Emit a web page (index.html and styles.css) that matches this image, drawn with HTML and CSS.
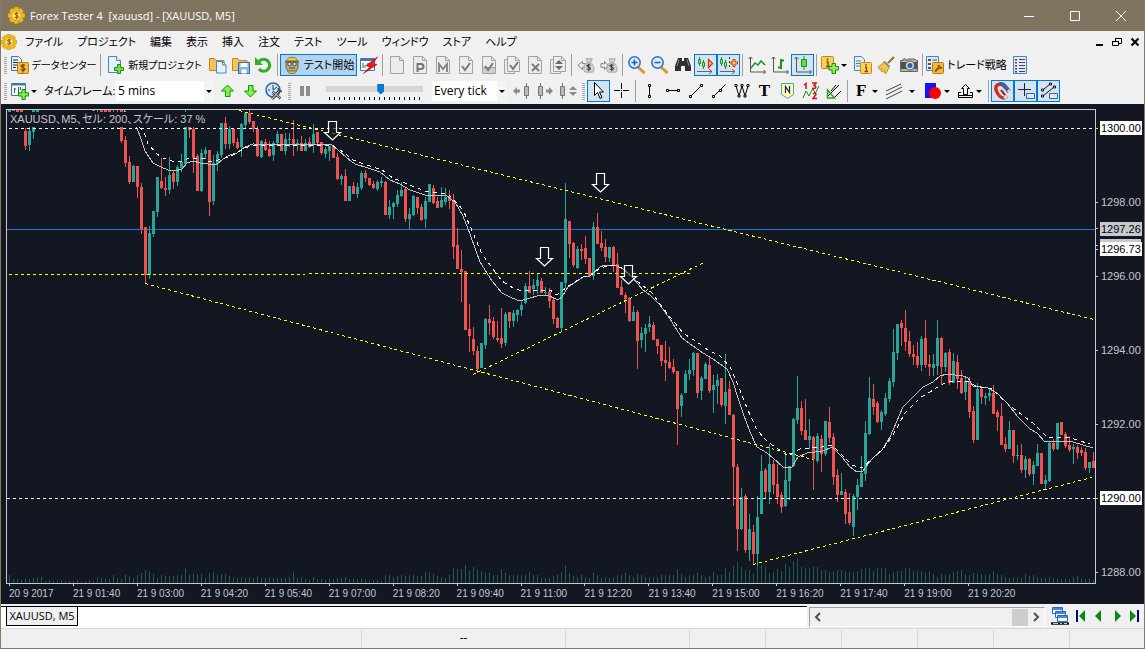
FILE: index.html
```html
<!DOCTYPE html>
<html lang="ja">
<head>
<meta charset="utf-8">
<title>Forex Tester 4</title>
<link rel="stylesheet" href="styles.css">
</head>
<body>
<svg class="defs" aria-hidden="true">
  <symbol id="gear" viewBox="0 0 18 18"><path d="M7 0h4l.6 2.4 2.2-1 2.6 2.8-1.200 2 2.800.9v3.800l-2.600.7 1 2.400-2.800 2.700-2.200-1.300-.9 2.600H7l-.8-2.500-2.300 1-2.600-2.700 1.200-2.200L0 11V7.200l2.500-.8-1-2.300L4.200 1.400l2 1z" fill="#f5b914" stroke="#c98a00" stroke-width=".6"/><circle cx="9" cy="9" r="5" fill="#ffe37a" stroke="#d79a10"/><path d="M11 7c-.5-1-3.600-1.300-3.600.4 0 1.600 3.600 1 3.600 2.800 0 1.600-3.300 1.500-3.900.2M9.200 5v8" fill="none" stroke="#8a6a1c" stroke-width="1.200"/></symbol>
  <symbol id="data" viewBox="0 0 18 18"><path d="M.5.5h7l3 3v11H.5z" fill="#e4effa" stroke="#44749f"/><path d="M2 4h5M2 6.500h5M2 9h4M2 11.500h3" stroke="#333"/><rect x="6.500" y="6.500" width="11" height="11" rx="1" fill="#f8bd3c" stroke="#b77a10"/><path d="M14 9.500c-1-1-4-1-4 .7 0 1.600 4 1 4 2.700 0 1.800-3.300 1.700-4.300.5M12 8v8.500" fill="none" stroke="#6b4a10" stroke-width="1.200"/></symbol>
  <symbol id="newdoc" viewBox="0 0 18 18"><path d="M1.500.5h8l4 4v12h-12z" fill="#e6f2fc" stroke="#4b83b8"/><path d="M9.500.5v4h4" fill="#fff" stroke="#4b83b8"/><path d="M10.500 8.500h3v3h3v3h-3v3h-3v-3h-3v-3h3z" fill="#7ee03c" stroke="#22891a"/></symbol>
  <symbol id="fopen" viewBox="0 0 18 18"><path d="M.5 14.500V2.500h5l1.500 2h8v10z" fill="#f8c25a" stroke="#c9861a"/><path d="M7.500 5.500h6l3.500 3.500v8H7.500z" fill="#e6f2fc" stroke="#4b83b8"/><path d="M13.500 5.500V9H17" fill="none" stroke="#4b83b8"/></symbol>
  <symbol id="fsave" viewBox="0 0 18 18"><path d="M.5 14.500V2.500h5l1.500 2h8v10z" fill="#f8c25a" stroke="#c9861a"/><path d="M6.500 6.500h11v11h-11z" fill="#86b4e6" stroke="#3768a5"/><path d="M8.500 7h7v4h-7zM9.500 13.500h5v4h-5z" fill="#fff"/></symbol>
  <symbol id="refresh" viewBox="0 0 18 18"><path d="M4 5.500A6 6 0 1 1 4 13" fill="none" stroke="#36ad2a" stroke-width="3.200"/><path d="M0 1v8h8z" fill="#36ad2a"/></symbol>
  <symbol id="tester" viewBox="0 0 18 18"><path d="M3.500 5C4 0 14 0 14.500 5z" fill="#e9c85a" stroke="#9a7d25"/><path d="M3 6h12v6l-2 3H5l-2-3z" fill="#b9ab8c" stroke="#6c6251"/><path d="M2 5.500h14" stroke="#806d32" stroke-width="1.500"/><circle cx="6.500" cy="8" r="1.800" fill="#e4e4e4" stroke="#444"/><circle cx="11.500" cy="8" r="1.800" fill="#e4e4e4" stroke="#444"/><path d="M6 12h6" stroke="#444"/><path d="M4.500 15h9l-2 2.500h-5z" fill="#e4bd49" stroke="#9a7d25"/></symbol>
  <symbol id="bolt" viewBox="0 0 18 18"><path d="M.5 2.500h14v12H.5z" fill="#fff" stroke="#3f76b5"/><path d="M1 4h13" stroke="#3f76b5" stroke-width="2"/><path d="M3 12V7M5 9v3M8 11V7M10 13V8" stroke="#267c24"/><path d="M17.500 1 6 9.500l4 1-6.500 7L17 8.500l-4-1z" fill="#f01818" stroke="#9d0b0b" stroke-width=".6"/></symbol>
  <symbol id="gdoc" viewBox="0 0 18 18"><path d="M2.500.5h9l4 4v13h-13z" fill="#ececec" stroke="#a2a2a2"/><path d="M11.500.5v4h4" fill="none" stroke="#a2a2a2"/></symbol>
  <symbol id="gdocs" viewBox="0 0 18 18"><path d="M1.500 3.500h10v14h-10z" fill="#ececec" stroke="#a2a2a2"/><path d="M4.500.5h8l4 4v11h-12z" fill="#ececec" stroke="#a2a2a2"/><path d="M12.500.5v4h4" fill="none" stroke="#a2a2a2"/></symbol>
  <symbol id="gp" viewBox="0 0 18 18"><use href="#gdoc"/><path d="M6.500 16V8H10q2.500.2 2.500 2.500T10 13H7" fill="none" stroke="#777" stroke-width="2"/></symbol>
  <symbol id="gm" viewBox="0 0 18 18"><use href="#gdoc"/><path d="M5 16V8l4 5 4-5v8" fill="none" stroke="#808080" stroke-width="1.800"/></symbol>
  <symbol id="gc" viewBox="0 0 18 18"><use href="#gdoc"/><path d="m5 10 3 4 5-7" fill="none" stroke="#7a7a7a" stroke-width="2"/></symbol>
  <symbol id="gch" viewBox="0 0 18 18"><use href="#gdoc"/><path d="M3 11h12v6H3z" fill="#cfcfcf"/><path d="M2 11.500h14" stroke="#a2a2a2"/><path d="m5 10 3 4 5-7" fill="none" stroke="#7a7a7a" stroke-width="2"/></symbol>
  <symbol id="gcs" viewBox="0 0 18 18"><use href="#gdocs"/><path d="m7 9 3 4 5-7" fill="none" stroke="#7a7a7a" stroke-width="2"/></symbol>
  <symbol id="gx" viewBox="0 0 18 18"><use href="#gdoc"/><path d="m6 8 7 7m0-7-7 7" fill="none" stroke="#7a7a7a" stroke-width="2"/></symbol>
  <symbol id="gud" viewBox="0 0 18 18"><use href="#gdocs"/><path d="m10 4 4 4H6zM10 14l4-4H6z" fill="#6b6b6b"/></symbol>
  <symbol id="gml" viewBox="0 0 20 18"><path d="M1 9.500 6 5v2.500h4v4H6V14z" fill="#eee" stroke="#777"/><path d="M10 2h7l-1.500 4h-4zM9 8q3-3 8 0 4 8 0 9H9q-3-3 0-9z" fill="#d2d2d2" stroke="#a5a5a5"/><path d="M15 9.500c-1-1-4-1-4 .6 0 1.500 4 1 4 2.700 0 1.600-3.300 1.600-4.200.4M13 8v8" fill="none" stroke="#444" stroke-width="1.200"/></symbol>
  <symbol id="gmr" viewBox="0 0 20 18"><path d="M10 2h7l-1.500 4h-4zM9 8q3-3 8 0 4 8 0 9H9q-3-3 0-9z" fill="#d2d2d2" stroke="#a5a5a5"/><path d="M9 9.500 5 5v2.500H1v4h4V14z" fill="#eee" stroke="#777"/><path d="M15 9.500c-1-1-4-1-4 .6 0 1.500 4 1 4 2.700 0 1.600-3.300 1.600-4.200.4M13 8v8" fill="none" stroke="#444" stroke-width="1.200"/></symbol>
  <symbol id="zin" viewBox="0 0 18 18"><path d="m10 11 6.500 6" stroke="#d79a27" stroke-width="3"/><circle cx="6.500" cy="6.500" r="5.700" fill="#d7ebfd" stroke="#2e6fc0" stroke-width="1.500"/><path d="M3.500 6.500h6M6.500 3.500v6" stroke="#2358a8" stroke-width="1.500"/></symbol>
  <symbol id="zout" viewBox="0 0 18 18"><path d="m10 11 6.500 6" stroke="#d79a27" stroke-width="3"/><circle cx="6.500" cy="6.500" r="5.700" fill="#d7ebfd" stroke="#2e6fc0" stroke-width="1.500"/><path d="M3.500 6.500h6" stroke="#2358a8" stroke-width="1.500"/></symbol>
  <symbol id="bino" viewBox="0 0 18 18"><path d="M4 2h4v3h2V2h4l3 8v5h-6v-5H7v5H1v-5z" fill="#2f2f33"/><path d="M5 3.500 3 10M13 3.500 15 10" stroke="#85858c"/></symbol>
  <symbol id="shift" viewBox="0 0 18 18"><path d="M2.500 1v9M6.500 4v9" stroke="#1d9425"/><path d="M1.500 3.500h2v4h-2zM5.500 6.500h2v4h-2z" fill="#9fe08b" stroke="#1d9425"/><path d="m11.500 3.500 4 4-4 4z" fill="#ffec3d" stroke="#e02020" stroke-width="1.200"/><path d="M0 15.500h15m-3-2.500 3 2.500-3 2.500" fill="none" stroke="#666"/></symbol>
  <symbol id="shift2" viewBox="0 0 18 18"><path d="M1.500 1v9M5.500 4v9" stroke="#1d9425"/><path d="M.5 3.500h2v4h-2zM4.500 6.500h2v4h-2z" fill="#9fe08b" stroke="#1d9425"/><path d="M9.500 1v12" stroke="#333" stroke-dasharray="2 2"/><path d="M13 3.500h2V6h2.500v2H15v2.500h-2V8h-2V6h2z" fill="#ffec3d" stroke="#e02020"/><path d="M0 15.500h15m-3-2.500 3 2.500-3 2.500" fill="none" stroke="#666"/></symbol>
  <symbol id="axes" viewBox="0 0 18 18"><path d="M2.500 1v15h15M.5 3l2-2 2 2M15.500 14l2 2-2 2" fill="none" stroke="#555"/></symbol>
  <symbol id="cline" viewBox="0 0 18 18"><use href="#axes"/><path d="m3 12 4-5 3 2 3-4 4 4" fill="none" stroke="#17951e" stroke-width="1.500"/></symbol>
  <symbol id="cbar" viewBox="0 0 18 18"><use href="#axes"/><path d="M10 3v10M7 11.500h3M10 4.500h3" fill="none" stroke="#17951e" stroke-width="2"/></symbol>
  <symbol id="ccan" viewBox="0 0 18 18"><use href="#axes"/><path d="M10 0v14" stroke="#17951e"/><path d="M7.500 3.500h5v7h-5z" fill="#5fdc4c" stroke="#17951e"/></symbol>
  <symbol id="iplus" viewBox="0 0 18 18"><rect x=".5" y=".5" width="12" height="12" rx="1" fill="#fbd05c" stroke="#c58a1d"/><path d="M6.500 2.500v2M5.500 6H7v4.500M5 10.500h4" fill="none" stroke="#76500d" stroke-width="1.500"/><path d="M11 7.500h3.500v3h3V14h-3v3.500H11V14H8v-3.500h3z" fill="#8bf05a" stroke="#22891a"/></symbol>
  <symbol id="icopy" viewBox="0 0 18 18"><path d="M.5.5h7l3 3v11H.5z" fill="#e4effa" stroke="#4b83b8"/><path d="M2 5h5M2 7.500h5M2 10h4" stroke="#4b83b8"/><rect x="6.500" y="6.500" width="11" height="11" rx="1" fill="#fbd05c" stroke="#c58a1d"/><path d="M12 8v2M11 11.500h1.500V15M10.500 15.500h3.500" fill="none" stroke="#76500d" stroke-width="1.300"/></symbol>
  <symbol id="broom" viewBox="0 0 18 18"><path d="m17 1-6 6" stroke="#a66b22" stroke-width="2"/><path d="m8 5 5 5-1 2-6-6z" fill="#7c8fa3"/><path d="m7 6.500 5 5-3 6-2-1 1-2.500-3 2-1.500-1.500 2-2-3 .8L1 11z" fill="#f2c84c" stroke="#b9841a" stroke-width=".8"/></symbol>
  <symbol id="cam" viewBox="0 0 18 18"><path d="M.5 4.500H3V3h3v1.500h1L8 3h7l1 1.500h1.500v11H.5z" fill="#b4b4b2" stroke="#666"/><path d="M1 6h16v7H1z" fill="#515151"/><circle cx="10" cy="9.500" r="4.500" fill="#d5dde5" stroke="#555"/><circle cx="10" cy="9.500" r="2.500" fill="#2b62a3"/></symbol>
  <symbol id="strat" viewBox="0 0 18 18"><path d="M.5.5h12v14H.5z" fill="#dcebf9" stroke="#4b83b8"/><path d="M2 3h3v2H2zM2 7h3v2H2zM2 11h3v2H2z" fill="#555"/><path d="M6.500 4H11M6.500 8H8" stroke="#555"/><rect x="6.500" y="6.500" width="11" height="11" rx="1" fill="#f4b93c" stroke="#b77a10"/><path d="m9 15.500 4-4m-.5-2.500 1 2.500 2.500.5" fill="none" stroke="#835812" stroke-width="2"/></symbol>
  <symbol id="list" viewBox="0 0 18 18"><path d="M2.500.5h13v17h-13z" fill="#dcebf9" stroke="#4b83b8"/><path d="M8 3.500h6M8 6.500h6M8 9.500h6M8 12.500h6M8 15.500h6" stroke="#445"/><path d="M4 3h2v1.500H4zM4 12h2v1.500H4zM4 15h2v1.500H4z" fill="#345"/><path d="M4 6h2v1.500H4zM4 9h2v1.500H4z" fill="#e01818"/></symbol>
  <symbol id="tfadd" viewBox="0 0 18 18"><path d="M.5 1.500h14v12H.5z" fill="#fff" stroke="#3f76b5"/><path d="M1 2.500h13" stroke="#3f76b5" stroke-width="2"/><path d="M3.500 11V6M3.500 7H5M7.500 11V5M9.500 8V5" stroke="#267c24"/><path d="M11 7.500h3.200v3.300h3.300V14h-3.300v3.500H11V14H7.500v-3.200H11z" fill="#7eee4c" stroke="#22891a"/></symbol>
  <symbol id="up" viewBox="0 0 18 18"><path d="m8.500 3 6 6H11v5.500H6.500V9h-4z" fill="#7cf442" stroke="#178c17"/></symbol>
  <symbol id="down" viewBox="0 0 18 18"><path d="m8.500 15 6-6H11V3.500H6.500V9h-4z" fill="#7cf442" stroke="#178c17"/></symbol>
  <symbol id="clock" viewBox="0 0 18 18"><circle cx="8" cy="8" r="7" fill="#cfe6fa" stroke="#2c64a8" stroke-width="1.500"/><path d="M8 3v5l4-3M3 8h2M8 12v1" fill="none" stroke="#245"/><path d="m7 17 8-9" stroke="#444" stroke-width="3"/><path d="m7.500 9.500 8 7" stroke="#444" stroke-width="2.500"/><path d="m7 17 8-9M7.500 9.500l8 7" stroke="#ddd"/><path d="m13 6 1 3 3 .5" fill="none" stroke="#444" stroke-width="1.500"/></symbol>
  <symbol id="pause" viewBox="0 0 18 18"><path d="M4 4h4v10H4zM10 4h4v10h-4z" fill="#8d8d8d"/></symbol>
  <symbol id="cback" viewBox="0 0 18 18"><path d="m0 9 4-4v2.500h3v3H4V13z" fill="#8b8b8b"/><path d="M13.500 1v16" stroke="#777"/><path d="M11.500 4.500h4v9h-4z" fill="#bbb" stroke="#777"/></symbol>
  <symbol id="cfwd" viewBox="0 0 18 18"><path d="m17 9-4-4v2.500h-3v3h3V13z" fill="#8b8b8b"/><path d="M4.500 1v16" stroke="#777"/><path d="M2.500 4.500h4v9h-4z" fill="#bbb" stroke="#777"/></symbol>
  <symbol id="cud" viewBox="0 0 18 18"><path d="m14 4 4 4h-8zM14 14l4-4h-8z" fill="#8b8b8b"/><path d="M3.500 1v16" stroke="#777"/><path d="M1.500 4.500h4v9h-4z" fill="#bbb" stroke="#777"/></symbol>
  <symbol id="cursor" viewBox="0 0 18 18"><path d="M4.500.5v13l3-3 2.500 6 2-1-2.500-5.500h4z" fill="#fff" stroke="#000"/></symbol>
  <symbol id="cross" viewBox="0 0 18 18"><path d="M8.500 1v6M8.500 10v6M1 8.500h6M10 8.500h6M8 8.500h1" stroke="#000"/></symbol>
  <symbol id="vl" viewBox="0 0 18 18"><path d="M8.500 4v10" stroke="#000"/><path d="M7.500 2.500h2v2h-2zM7.500 13.500h2v2h-2z" fill="#fff" stroke="#000"/></symbol>
  <symbol id="hl" viewBox="0 0 18 18"><path d="M4 8.500h10" stroke="#000"/><path d="M2.500 7.500h2v2h-2zM13.500 7.500h2v2h-2z" fill="#fff" stroke="#000"/></symbol>
  <symbol id="dl" viewBox="0 0 18 18"><path d="M4 14 14 4" stroke="#000"/><path d="M2.500 13.500h2v2h-2zM13.500 2.500h2v2h-2z" fill="#fff" stroke="#000"/></symbol>
  <symbol id="ray" viewBox="0 0 18 18"><path d="M4 14 15.500 2.500" stroke="#000"/><path d="M2.500 13.500h2v2h-2zM9.500 7.500h2v2h-2z" fill="#fff" stroke="#000"/></symbol>
  <symbol id="wave" viewBox="0 0 18 18"><path d="m3 4 3 10 3-10 3 10 3-10" fill="none" stroke="#000"/><path d="M2 2.500h2v2H2zM5 13h2v2H5zM8 2.500h2v2H8zM11 13h2v2h-2zM14 2.500h2v2h-2z" fill="#fff" stroke="#000"/></symbol>
  <symbol id="note" viewBox="0 0 18 18"><path d="M2.500 1.500h12v11l-6 4-6-4z" fill="#ffffa0" stroke="#4ba4c9"/><path d="M6.500 11V4.500l4 6V4" fill="none" stroke="#1c1c80" stroke-width="1.200"/></symbol>
  <symbol id="ell" viewBox="0 0 18 18"><path d="m1 16 3-7 3 5 4-8 2 6 4-8" fill="none" stroke="#148a18"/><path d="M2 3l2-1.500V7M10 1h4l-2 2.500q2.500.5 1.500 2.500L10 6.500M11 12q3-2 3 .5L11 16.500h4" fill="none" stroke="#d01111" stroke-width="1.500"/></symbol>
  <symbol id="fan" viewBox="0 0 18 18"><path d="M3 14 14 3M6 9l5-6M9 16l7-7" stroke="#000"/><path d="M2.500 8v8h7z" fill="none" stroke="#28a525" stroke-width="1.500"/></symbol>
  <symbol id="lines" viewBox="0 0 18 18"><path d="m1 9 15-7M1 13l16-8M1 17l16-8" stroke="#444"/></symbol>
  <symbol id="shapes" viewBox="0 0 18 18"><path d="M1 1h11v15H1z" fill="#1212ff"/><circle cx="11" cy="11" r="6" fill="#f00"/></symbol>
  <symbol id="upload" viewBox="0 0 18 18"><path d="m9.500 2.500 4 4h-2v6h-4v-6h-2zM5 10.500H2.500v5h14v-5H14M2.500 13.500h14" fill="none" stroke="#000"/></symbol>
  <symbol id="magnet" viewBox="0 0 18 18"><path d="M2 8Q1 3 6 2q3 0 9 8M2 8q3 8 8 8l3-2" fill="none" stroke="#cf2d22" stroke-width="3.500"/><path d="M6 2q3-1 6 3l4 5" fill="none" stroke="#2d64b4" stroke-width="3.500"/><path d="m7 8 4 5" stroke="#912" stroke-width="2"/><path d="m14 8 3 3M10 16l3-2" stroke="#ddd" stroke-width="3"/></symbol>
  <symbol id="crossw" viewBox="0 0 18 18"><path d="M7.500 1v13M1 7.500h13" stroke="#222"/><path d="M9.500 11.500h8v5h-8z" fill="#d9ecff" stroke="#2c63b8"/></symbol>
  <symbol id="linew" viewBox="0 0 18 18"><path d="m3 8 7-6M3 14l11-9" stroke="#111"/><path d="M1.500 7h2v2h-2zM9.500 1h2v2h-2zM1.500 13h2v2h-2zM13.500 4h2v2h-2z" fill="#fff" stroke="#111"/><path d="M9.500 11.500h8v5h-8z" fill="#d9ecff" stroke="#2c63b8"/></symbol>
  <symbol id="wins" viewBox="0 0 18 18"><path d="M1.500.5h10v6h-10zM4.500 4.500h10v6h-10zM6.500 8.500h10v6h-10z" fill="#fff" stroke="#2b62c4"/><path d="M2 2h9M5 6h9M7 10h9" stroke="#3f8be0" stroke-width="2"/><path d="M0 16.500h18" stroke="#111" stroke-width="2.500"/><path d="M2 16.500h5M9 16.500h2M13 16.500h3" stroke="#9cf"/></symbol>
</svg>

<div class="window">
  <header class="titlebar">
    <svg class="logo"><use href="#gear"/></svg>
    <h1>Forex Tester 4&nbsp; [xauusd] - [XAUUSD, M5]</h1>
    <button class="wc" aria-label="最小化"><svg viewBox="0 0 12 12"><path d="M1 6.500h10"/></svg></button>
    <button class="wc" aria-label="最大化"><svg viewBox="0 0 12 12"><path d="M1.500 1.500h9v9h-9z"/></svg></button>
    <button class="wc" aria-label="閉じる"><svg viewBox="0 0 12 12"><path d="m1 1 10 10m0-10L1 11"/></svg></button>
  </header>

  <nav class="menu">
    <svg class="mlogo"><use href="#gear"/></svg>
    <button>ファイル</button><button>プロジェクト</button><button>編集</button><button>表示</button><button>挿入</button><button>注文</button><button>テスト</button><button>ツール</button><button>ウィンドウ</button><button>ストア</button><button>ヘルプ</button>
    <div class="mdi">
      <button aria-label="子ウィンドウ最小化"><svg viewBox="0 0 10 10"><path d="M2 8h7" stroke-width="2"/></svg></button>
      <button aria-label="子ウィンドウ復元"><svg viewBox="0 0 10 10"><path d="M3.500 4V1.500h6v5H7M3 1.500h7M.5 4.500h6v4h-6zM0 4.500h7"/></svg></button>
      <button aria-label="子ウィンドウを閉じる"><svg viewBox="0 0 10 10"><path d="m1.500 1.500 7 7m0-7-7 7" stroke-width="2"/></svg></button>
    </div>
  </nav>

  <div class="toolbar">
    <i class="grip"></i>
    <button class="b data"><svg><use href="#data"/></svg>データセンター</button><i class="sep"></i>
    <button class="b proj"><svg><use href="#newdoc"/></svg>新規プロジェクト</button>
    <button class="b" aria-label="開く"><svg><use href="#fopen"/></svg></button>
    <button class="b" aria-label="保存"><svg><use href="#fsave"/></svg></button>
    <button class="b" aria-label="更新"><svg><use href="#refresh"/></svg></button><i class="sep"></i>
    <button class="b test start"><svg><use href="#tester"/></svg>テスト開始</button>
    <button class="b" aria-label="高速テスト"><svg><use href="#bolt"/></svg></button><i class="sep"></i>
    <button class="b" aria-label="注文"><svg><use href="#gdoc"/></svg></button>
    <button class="b" aria-label="指値注文"><svg><use href="#gp"/></svg></button>
    <button class="b" aria-label="成行注文"><svg><use href="#gm"/></svg></button>
    <button class="b" aria-label="決済"><svg><use href="#gc"/></svg></button>
    <button class="b" aria-label="一部決済"><svg><use href="#gch"/></svg></button>
    <button class="b" aria-label="全決済"><svg><use href="#gcs"/></svg></button>
    <button class="b" aria-label="削除"><svg><use href="#gx"/></svg></button>
    <button class="b" aria-label="変更"><svg><use href="#gud"/></svg></button><i class="sep"></i>
    <button class="b" aria-label="前の注文"><svg><use href="#gml"/></svg></button>
    <button class="b" aria-label="次の注文"><svg><use href="#gmr"/></svg></button><i class="sep"></i>
    <button class="b" aria-label="拡大"><svg><use href="#zin"/></svg></button>
    <button class="b" aria-label="縮小"><svg><use href="#zout"/></svg></button>
    <button class="b" aria-label="検索"><svg><use href="#bino"/></svg></button>
    <button class="b on" aria-label="自動スクロール"><svg><use href="#shift"/></svg></button>
    <button class="b on" aria-label="チャートシフト"><svg><use href="#shift2"/></svg></button><i class="sep"></i>
    <button class="b" aria-label="ライン"><svg><use href="#cline"/></svg></button>
    <button class="b" aria-label="バー"><svg><use href="#cbar"/></svg></button>
    <button class="b on" aria-label="ローソク足"><svg><use href="#ccan"/></svg></button><i class="sep"></i>
    <button class="b drop" aria-label="インジケーター追加"><svg><use href="#iplus"/></svg></button>
    <button class="b" aria-label="インジケーター一覧"><svg><use href="#icopy"/></svg></button>
    <button class="b" aria-label="クリア"><svg><use href="#broom"/></svg></button>
    <button class="b" aria-label="スクリーンショット"><svg><use href="#cam"/></svg></button><i class="sep"></i>
    <button class="b strat"><svg><use href="#strat"/></svg>トレード戦略</button>
    <button class="b" aria-label="戦略一覧"><svg><use href="#list"/></svg></button>
  </div>

  <div class="toolbar">
    <i class="grip"></i>
    <button class="b drop" aria-label="新規チャート"><svg><use href="#tfadd"/></svg></button>
    <label class="tf" for="tf">タイムフレーム:</label>
    <select id="tf" class="tfsel"><option>5 mins</option></select>
    <button class="b" aria-label="上の時間足"><svg><use href="#up"/></svg></button>
    <button class="b" aria-label="下の時間足"><svg><use href="#down"/></svg></button>
    <button class="b" aria-label="時間設定"><svg><use href="#clock"/></svg></button>
    <i class="grip"></i>
    <button class="b" aria-label="一時停止"><svg><use href="#pause"/></svg></button>
    <div class="speed"><input type="range" min="0" max="100" value="57" aria-label="速度"><i class="ticks"></i></div>
    <select class="ticksel" aria-label="ティック"><option>Every tick</option></select>
    <button class="b" aria-label="戻る"><svg><use href="#cback"/></svg></button>
    <button class="b" aria-label="進む"><svg><use href="#cfwd"/></svg></button>
    <button class="b" aria-label="ステップ"><svg><use href="#cud"/></svg></button>
    <i class="grip"></i>
    <button class="b on" aria-label="選択"><svg><use href="#cursor"/></svg></button>
    <button class="b" aria-label="十字"><svg><use href="#cross"/></svg></button><i class="sep"></i>
    <button class="b" aria-label="垂直線"><svg><use href="#vl"/></svg></button>
    <button class="b" aria-label="水平線"><svg><use href="#hl"/></svg></button>
    <button class="b" aria-label="線分"><svg><use href="#dl"/></svg></button>
    <button class="b" aria-label="レイ"><svg><use href="#ray"/></svg></button>
    <button class="b" aria-label="ポリライン"><svg><use href="#wave"/></svg></button>
    <button class="b glyph">T</button>
    <button class="b" aria-label="メモ"><svg><use href="#note"/></svg></button>
    <button class="b" aria-label="エリオット波動"><svg><use href="#ell"/></svg></button>
    <button class="b" aria-label="ファン"><svg><use href="#fan"/></svg></button><i class="sep"></i>
    <button class="b drop glyph">F</button>
    <button class="b drop wide" aria-label="チャネル"><svg><use href="#lines"/></svg></button>
    <button class="b drop" aria-label="図形"><svg><use href="#shapes"/></svg></button>
    <button class="b drop" aria-label="矢印"><svg><use href="#upload"/></svg></button><i class="sep"></i>
    <button class="b on" aria-label="マグネット"><svg><use href="#magnet"/></svg></button>
    <button class="b on" aria-label="同期カーソル"><svg><use href="#crossw"/></svg></button>
    <button class="b on" aria-label="同期描画"><svg><use href="#linew"/></svg></button>
  </div>

  <main class="chart">
    <div class="plot">
      <svg id="plot" viewBox="7 110 1088 473" preserveAspectRatio="none"></svg>
      <p class="caption">XAUUSD、M5、セル: 200、スケール: 37 %</p>
    </div>
    <div class="prices" id="prices"></div>
    <div class="times" id="times"></div>
  </main>

  <div class="tabs">
    <div class="tabstrip"><button class="tab">XAUUSD, M5</button></div>
    <div class="scroll">
      <button aria-label="左へ"><svg viewBox="0 0 8 10"><path d="M6 1 2 5l4 4"/></svg></button>
      <i class="thumb"></i>
      <button aria-label="右へ"><svg viewBox="0 0 8 10"><path d="m2 1 4 4-4 4"/></svg></button>
    </div>
    <div class="navs">
      <button aria-label="ウィンドウ"><svg class="wins"><use href="#wins"/></svg></button>
      <button aria-label="最初へ"><svg viewBox="0 0 12 12"><path d="M1 0h2v12H1z" fill="#000080"/><path d="M10 0v12L4 6z" fill="#0a8a0a"/></svg></button>
      <button aria-label="前へ"><svg viewBox="0 0 12 12"><path d="M8 0v12L2 6z" fill="#0a8a0a"/></svg></button>
      <button aria-label="次へ"><svg viewBox="0 0 12 12"><path d="M4 0v12l6-6z" fill="#0a8a0a"/></svg></button>
      <button aria-label="最後へ"><svg viewBox="0 0 12 12"><path d="M1 0v12l6-6z" fill="#0a8a0a"/><path d="M8 0h2v12H8z" fill="#000080"/></svg></button>
    </div>
  </div>
  <footer class="status"><span></span><span>--</span><span></span><span></span><span></span><span></span><span></span><span></span><span></span></footer>
</div>
<script src="chart.js"></script>
</body>
</html>
```

FILE: styles.css
```css
* { box-sizing: border-box; }
body {
  margin: 0;
  font: 12px/16px "Open Sans", "Noto Sans CJK JP", sans-serif;
  color: #000;
}
button, select, input { font: inherit; color: inherit; margin: 0; }
button { border: 0; padding: 0; background: none; white-space: nowrap; }
.defs { position: absolute; width: 0; height: 0; }
.window {
  display: flex;
  flex-direction: column;
  height: 100vh;
  border: 1px solid #857b66;
  border-top: 0;
  background: #f0f0f0;
}

.titlebar {
  display: flex;
  align-items: center;
  flex: 0 0 31px;
  padding-left: 7px;
  background: #7f745f;
  color: #fff;
}
.titlebar h1 {
  flex: 1;
  margin: 0 0 0 5px;
  font-size: 11px;
  font-weight: 400;
}
.logo { width: 17px; height: 17px; }
.wc { width: 46px; height: 30px; display: grid; place-items: center; }
.wc svg { width: 12px; height: 12px; fill: none; stroke: #fff; }

.menu {
  display: flex;
  align-items: center;
  flex: 0 0 21px;
  gap: 14px;
  font-size: 11px;
  font-feature-settings: "palt";
}
.mlogo { width: 16px; height: 16px; margin-right: -6px; }
.mdi { display: flex; gap: 8px; margin-left: auto; padding-right: 4px; }
.mdi button { width: 10px; height: 16px; display: grid; place-items: center; }
.mdi svg { width: 10px; height: 10px; fill: none; stroke: #000; }

.toolbar {
  display: flex;
  align-items: center;
  flex: 0 0 26px;
  font-feature-settings: "palt";
}
.toolbar > * { flex: none; }
.grip {
  width: 3px;
  height: 17px;
  margin: 0 2px 0 3px;
  background: repeating-linear-gradient(#a8a8a8 0 1px, #f0f0f0 1px 2px);
}
.sep { width: 1px; height: 22px; margin: 0 2px; background: #a0a0a0; }
.b {
  display: flex;
  align-items: center;
  justify-content: center;
  width: 23px;
  height: 22px;
  gap: 3px;
  font-size: 11px;
}
.b svg { flex: none; width: 18px; height: 18px; }
.on { background: #d5e3f0; border: 1px solid #0078d7; }
.start { background: #b3d4f0; border: 1px solid #0078d7; }
.data { width: 89px; font-size: 10px; }
.proj { width: 103px; font-size: 10px; }
.test { width: 77px; }
.strat { width: 83px; }
.drop { width: 32px; gap: 2px; padding-left: 2px; justify-content: flex-start; }
.drop::after {
  content: "";
  border: 3px solid transparent;
  border-top-color: #000;
  border-bottom: 0;
}
.wide { width: 40px; gap: 6px; padding-left: 3px; }
.glyph { font: bold 17px/22px "Liberation Serif", serif; }
.drop.glyph { gap: 6px; padding-left: 6px; }
.tf { width: 75px; padding-left: 3px; font-size: 11px; white-space: nowrap; }
select {
  appearance: none;
  height: 20px;
  border: 0;
  border-radius: 0;
  padding: 0 0 0 2px;
  background: #fff url("data:image/svg+xml,%3Csvg xmlns='http://www.w3.org/2000/svg' width='10' height='20'%3E%3Cpath fill='%23f4f4f4' d='M0 0h10v20H0z'/%3E%3Cpath d='M2 9h6l-3 3z'/%3E%3C/svg%3E") no-repeat right center;
}
.tfsel { width: 98px; margin-right: 2px; }
.ticksel { width: 75px; margin-right: 3px; }
.speed { width: 97px; margin: 0 9px 0 10px; display: flex; flex-direction: column; }
.speed input {
  appearance: none;
  width: 100%;
  height: 14px;
  background: linear-gradient(#d6d6d6, #d6d6d6) no-repeat center / 100% 6px;
}
.speed input::-webkit-slider-thumb {
  appearance: none;
  width: 7px;
  height: 11px;
  background: #0078d7;
  clip-path: polygon(0 0, 100% 0, 100% 70%, 50% 100%, 0 70%);
}
.ticks {
  height: 3px;
  margin: 1px 3px 0;
  background: repeating-linear-gradient(90deg, #000 0 1px, transparent 1px 5px);
}

.chart {
  flex: 1;
  min-height: 0;
  display: grid;
  grid-template: minmax(0, 1fr) 20px / minmax(0, 1fr) 48px;
  padding: 5px 0 0 5px;
  background: #131722;
  color: #c3c7cf;
  font-family: "Liberation Sans", "Noto Sans CJK JP", sans-serif;
}
.plot { position: relative; border: 1px solid #c8ccd2; }
.plot svg { display: block; width: 100%; height: 100%; }
.caption {
  position: absolute;
  top: 2px;
  left: 1px;
  margin: 0;
  padding: 0 2px;
  background: #131722;
  font-size: 11px;
  line-height: 15px;
  font-feature-settings: "palt";
}
.prices { position: relative; font-size: 11px; line-height: 14px; }
.price { position: absolute; left: 0; display: flex; align-items: center; margin-top: -7px; }
.price::before { content: ""; width: 2px; height: 1px; background: #c8ccd2; }
.price span { margin-left: 2px; padding: 0 1px; min-width: 41px; height: 14px; }
.price.white span { background: #fff; color: #000; }
.price.gray span { background: #c6c9cd; color: #000; }
.times {
  display: grid;
  grid-template-columns: repeat(17, 1fr);
  padding-left: 3px;
  font-size: 10px;
  line-height: 15px;
}
.times span::before { content: ""; display: block; width: 1px; height: 2px; background: #c8ccd2; }

.tabs { display: flex; flex: 0 0 24px; }
.tabstrip {
  flex: 1;
  margin-top: 2px;
  border-top: 1px solid #000;
  padding-left: 5px;
  background: #fff;
}
.tab {
  display: block;
  width: 72px;
  height: 19px;
  border: 1px solid #000;
  border-top: 0;
  background: #f0f0f0;
  font-size: 11px;
}
.scroll {
  display: flex;
  align-items: center;
  width: 236px;
  height: 20px;
  margin: 3px 6px 0 2px;
  border: 1px solid #a0a0a0;
  border-right-color: #fff;
  border-bottom-color: #fff;
}
.scroll button { width: 16px; height: 16px; display: grid; place-items: center; }
.scroll svg { width: 8px; height: 10px; fill: none; stroke: #505050; stroke-width: 2; }
.thumb { width: 16px; height: 17px; margin-left: auto; background: #cdcdcd; }
.navs { display: flex; align-items: center; gap: 6px; padding-right: 3px; }
.navs svg { display: block; width: 12px; height: 12px; }
.navs .wins { width: 18px; height: 18px; }

.status { display: flex; flex: 0 0 20px; border-top: 1px solid #d7d7d7; }
.status span { flex: 0 0 76px; margin: 1px 0; border-right: 1px solid #d7d7d7; text-align: center; }
.status span:nth-child(1) { flex-basis: 361px; }
.status span:nth-child(2) { flex-basis: 204px; }
.status span:nth-child(3) { flex-basis: 124px; }
.status span:last-child { flex: 1; border: 0; }
```

FILE: chart.js
```js
// Each candle: wick top, body top, body bottom, wick bottom, direction (1 up, 0 down); one every 4 units.
const head = [
  [9,110,110,112,112,1],[13,110,110,111,111,0],[17,110,110,112,112,0],[21,110,110,127,127,0],
  [25,128,131,146,150,0],[29,126,131,145,151,1],[33,110,110,132,139,1],[37,110,110,112,112,1],
  [93,110,110,111,111,0],[97,110,110,110,128,1],[101,110,110,112,112,0],[105,110,110,112,112,0],
  [109,110,110,112,112,0],[113,110,110,110,129,1],[117,110,110,110,129,0]
];
const body = `110 110 141 143 0|136 140 163 167 0|156 162 182 184 0|165 166 182 182 1|166 166 187 198 0|183 187 229 234 0|227 227 275 283 0|226 233 275 279 1|211 211 234 237 1|177 177 212 217 1
158 181 188 189 0|177 188 190 196 0|157 175 190 194 1|170 173 182 189 0|165 167 182 186 1|154 162 168 172 1|110 112 164 164 1|112 112 130 138 0|127 129 158 173 0|154 156 191 191 0
149 153 191 192 1|147 150 154 159 1|150 150 202 216 0|155 163 201 205 1|151 154 164 171 1|123 123 155 158 1|117 123 144 149 0|126 129 144 149 1|128 129 143 146 0|138 142 148 149 0
123 124 147 157 1|113 113 125 129 1|109 113 122 124 0|121 121 129 132 0|126 129 156 157 0|140 141 157 158 1|139 142 150 151 0|141 149 156 157 0|141 143 155 161 1|131 134 143 145 1
134 134 151 151 0|133 139 151 155 1|133 139 140 147 1|120 139 144 156 0|139 143 145 151 1|136 143 151 151 0|139 143 151 151 1|137 142 147 148 0|124 134 144 153 1|132 132 143 144 0
142 142 153 155 0|147 149 154 158 1|146 146 151 161 1|146 146 158 158 0|153 157 179 180 0|174 176 179 185 1|169 176 201 201 0|186 186 201 201 1|182 186 194 194 0|183 187 194 198 1
171 173 188 190 1|170 173 178 182 0|178 178 185 186 0|181 184 188 189 0|180 182 189 191 1|177 181 183 187 1|181 182 215 215 0|200 207 215 219 1|202 203 207 219 1|190 195 204 207 1
182 190 196 197 1|187 189 219 222 0|208 214 219 229 1|195 196 215 216 1|197 197 208 214 0|204 207 220 221 0|197 201 219 228 1|184 184 202 202 1|185 188 203 204 0|197 201 208 208 0
187 200 207 208 1|188 197 202 205 1|190 196 201 209 0|194 200 247 259 0|228 245 269 269 0|250 269 272 302 0|271 271 330 330 0|304 329 336 352 0|327 339 351 355 0|346 351 369 373 0
343 343 368 368 1|318 319 345 349 1|305 319 323 335 0|317 321 337 339 0|321 338 340 342 0|308 338 344 348 0|312 314 343 346 1|312 312 321 328 0|310 313 321 327 1|309 310 315 322 1
300 305 310 316 1|283 286 303 304 1|271 286 293 293 0|279 285 289 295 1|274 280 286 294 1|278 281 293 293 0|287 292 293 296 1|288 292 301 308 0|299 300 319 324 0|317 318 328 328 0
282 282 328 331 1|183 219 283 288 1|221 221 244 258 0|242 243 265 267 0|246 249 268 269 1|244 249 251 260 0|236 248 259 264 0|258 258 276 277 0|222 227 276 280 1|213 227 244 244 0
231 243 248 251 0|239 247 257 262 0|247 247 258 262 1|246 247 266 272 0|253 264 288 288 0|280 287 295 295 0|293 295 299 313 0|297 298 321 322 0|306 312 321 321 1|310 312 341 369 0
327 333 340 348 1|324 328 334 352 1|316 324 327 332 1|322 325 340 340 0|339 339 346 354 0|345 345 361 366 0|341 360 363 381 0|347 362 368 369 0|359 367 372 374 0|371 371 409 445 0
393 395 406 417 1|370 374 393 393 1|359 370 374 380 1|352 353 370 376 1|353 353 393 398 0|376 378 391 400 1|362 364 379 379 1|356 365 391 393 0|375 385 390 413 1|374 380 386 404 1
378 378 405 407 0|354 392 406 424 1|381 389 415 415 0|414 415 467 506 0|464 467 529 551 0|488 497 529 530 1|494 496 550 553 0|514 529 550 561 1|525 532 554 564 0|496 517 554 566 1
455 471 514 514 1|468 470 492 499 0|444 464 492 504 1|460 464 485 494 0|464 484 497 504 0|492 495 507 513 0|452 480 506 507 1|466 466 481 500 1|418 419 466 467 1|376 408 420 424 1
401 408 431 435 0|399 430 440 440 0|419 436 440 449 1|436 437 459 490 0|433 436 461 463 1|435 439 454 472 0|421 421 454 456 1|407 422 438 443 0|433 437 477 485 0|469 475 495 502 0
473 491 495 495 1|489 492 514 524 0|493 512 523 525 0|494 496 527 536 1|479 485 497 510 1|456 473 487 487 1|421 433 474 481 1|377 398 434 435 1|384 399 407 415 0|401 403 422 423 0
410 412 422 430 1|393 398 414 416 1|378 381 399 402 1|329 352 382 387 1|324 324 353 360 1|320 323 328 346 0|310 328 342 351 0|331 341 354 357 0|345 354 357 365 0|342 356 365 368 0
336 339 365 371 1|320 338 365 368 0|355 364 367 376 0|354 364 368 376 1|320 338 366 375 1|337 338 367 385 0|352 353 367 372 1|349 352 383 385 0|353 361 383 383 1|355 362 379 389 0
370 378 393 394 0|378 381 392 400 1|377 381 412 418 0|406 411 440 443 0|383 389 440 440 1|386 389 397 404 0|393 396 398 405 1|389 393 396 401 1|385 393 414 414 0|410 412 417 431 0
403 416 445 445 0|437 444 449 452 0|421 430 449 449 1|430 430 456 463 0|445 455 456 460 1|444 455 470 473 0|456 459 470 478 1|458 459 474 476 0|461 465 474 485 1|444 453 466 466 1
453 453 484 484 0|475 480 484 489 1|441 443 481 482 1|439 443 449 451 0|423 423 449 450 1|422 422 435 435 0|432 434 446 448 0|436 445 450 452 0|444 447 449 464 1|445 447 453 459 0
447 450 453 456 0|448 452 468 470 0|462 462 468 473 1|452 461 468 468 0`;
const candles = head.concat(body.split(/[|\n]/).map((s, i) => [121 + i * 4, ...s.trim().split(' ').map(Number)]));

const volume = '8 4 4 3 4 4 5 6 6 2 3 2 3 3 2 2 2 3 1 2 3 2 6 5 4 4 8 5 4 8 7 5 8 10 13 12 9 5 8 7 7 7 8 8 15 8 9 9 9 5 10 11 8 9 9 7 6 5 6 5 6 5 7 5 5 6 5 5 5 5 6 11 5 6 4 3 6 4 4 3 4 4 5 5 6 4 4 4 5 4 3 3 3 2 8 8 6 7 8 7 8 8 7 7 11 11 9 7 6 5 8 15 14 14 18 12 16 14 12 11 10 8 8 14 10 8 8 8 8 8 11 8 8 5 5 5 7 8 11 18 10 7 6 8 6 5 10 8 5 6 5 6 8 8 10 8 6 9 8 6 6 6 6 8 8 8 8 14 9 6 8 8 10 8 6 7 11 8 8 15 11 17 21 16 13 13 9 17 18 17 10 11 14 12 19 16 22 25 16 15 15 16 16 13 13 11 12 13 13 12 11 11 12 14 15 15 12 15 15 15 9 11 12 12 15 15 12 12 12 11 12 9 6 9 8 9 11 12 13 9 8 10 9 9 8 9 12 9 8 6 5 6 6 5 9 7 8 6 5 5 6 5 4 4 4 4 6 7 4 4 4 3 4 5 4 3 3 6 6 7'.split(' ').map(Number);

const solid = '124,110 130,118 137,128 141,139 145,151 149,157 153,163 161,167 168,170 175,171 182,169 187,163 193,161 200,163 208,164 217,164 223,159 230,155 237,153 245,147 253,144 300,145 317,144 332,145 338,150 347,158 355,164 368,168 380,172 390,180 400,184 410,190 425,195 447,196 455,202 463,216 470,234 480,262 492,281 502,293 512,298 520,301 530,298 537,296 547,295 558,300 562,297 568,287 583,277 590,276 600,267 605,265 615,265 623,269 633,278 643,290 650,295 660,305 670,319 682,338 693,346 703,353 713,359 720,364 727,369 733,382 738,398 743,413 750,432 757,447 767,453 773,458 783,467 792,467 798,457 807,453 823,451 832,447 842,457 850,467 857,472 863,471 872,459 882,450 890,437 903,407 915,395 923,387 933,382 940,376 947,374 963,376 968,378 973,386 988,388 997,393 1007,403 1018,417 1030,429 1037,433 1045,442 1060,441 1073,442 1093,448';
const dashed = '139,127 144,132 148,144 157,154 163,158 175,162 182,161 190,158 203,158 210,162 222,159 233,155 245,148 253,145 300,145 332,145 343,152 353,160 367,165 382,170 393,178 412,186 425,191 448,194 455,201 463,210 470,226 482,254 493,269 502,281 513,288 522,291 550,290 557,295 567,287 583,277 590,276 600,268 613,265 622,268 637,281 652,293 660,304 667,313 683,333 697,342 708,350 720,356 730,367 738,385 747,408 757,430 768,442 788,456 800,449 822,447 832,445 843,456 852,465 862,468 872,459 883,449 893,435 905,413 920,398 938,387 947,382 960,381 970,382 977,387 992,389 1003,400 1018,412 1033,423 1047,437 1067,437 1090,444';

const line = (x1, y1, x2, y2, stroke, dash = '3 3') =>
  `<path d="M${x1} ${y1 + .5}L${x2} ${y2 + .5}" stroke="${stroke}" stroke-dasharray="${dash}"/>`;
const arrow = (x, y) =>
  `<path d="M${x - 3.5} ${y + .5}h8v11h4l-8 7.500-8-7.500h4z" fill="#131722" fill-opacity=".6" stroke="#fff" stroke-width="1.200"/>`;

let out = volume.map((h, i) => `<rect x="${9 + i * 4}" y="${583 - h}" width="1" height="${h}" fill="#1c5a57"/>`).join('');
out += line(7, 229, 1095, 229, '#1c78d4', 'none');
for (const [x, h, t, b, l, up] of candles) {
  const c = up ? '#26a69a' : '#ef5350';
  out += `<rect x="${x}" y="${h}" width="1" height="${l - h}" fill="${c}"/>`;
  if (b > t) out += `<rect x="${x - 1}" y="${t}" width="3" height="${b - t}" fill="${c}"/>`;
}
out += line(9, 128, 1095, 128, '#fff') + line(7, 498, 1095, 498, '#fff');
out += line(9, 274, 305, 274, '#ff0') + line(309, 273, 690, 273, '#ff0');
out += line(239, 110, 1094, 319, '#ff0') + line(145, 283, 813, 459, '#ff0');
out += line(473, 374, 704, 262, '#ff0') + line(753, 564, 1092, 477, '#ff0');
out = `<g shape-rendering="crispEdges" fill="none">${out}
  <polyline points="${solid}" stroke="#c0c0c0"/><polyline points="${dashed}" stroke="#fff" stroke-dasharray="4 4"/></g>`;
out += arrow(332, 121) + arrow(544, 247) + arrow(600, 173) + arrow(628, 265);
document.getElementById('plot').innerHTML = out;

// Price scale: 37 units per 1.00, with the plot frame spanning 475 units from 109.
const price = (p, y, cls) =>
  `<div class="price ${cls}" style="top:${((y - 109) / 475 * 100).toFixed(3)}%"><span>${p}</span></div>`;
let scale = [1298, 1296, 1294, 1292, 1288].map(p => price(p.toFixed(2), 128 + (1300 - p) * 37, '')).join('');
scale += price('1300.00', 128, 'white') + price('1290.00', 498, 'white') + price('1297.26', 229, 'gray');
scale += price('', 246, 'gray') + price('1296.73', 249, 'white');
document.getElementById('prices').innerHTML = scale;

const times = ['20 9 2017'];
for (let i = 1; i < 16; i++) {
  const m = 20 + i * 80;
  times.push('21 9 ' + String(Math.floor(m / 60)).padStart(2, '0') + ':' + String(m % 60).padStart(2, '0'));
}
document.getElementById('times').innerHTML = times.map(t => `<span>${t}</span>`).join('');
```
